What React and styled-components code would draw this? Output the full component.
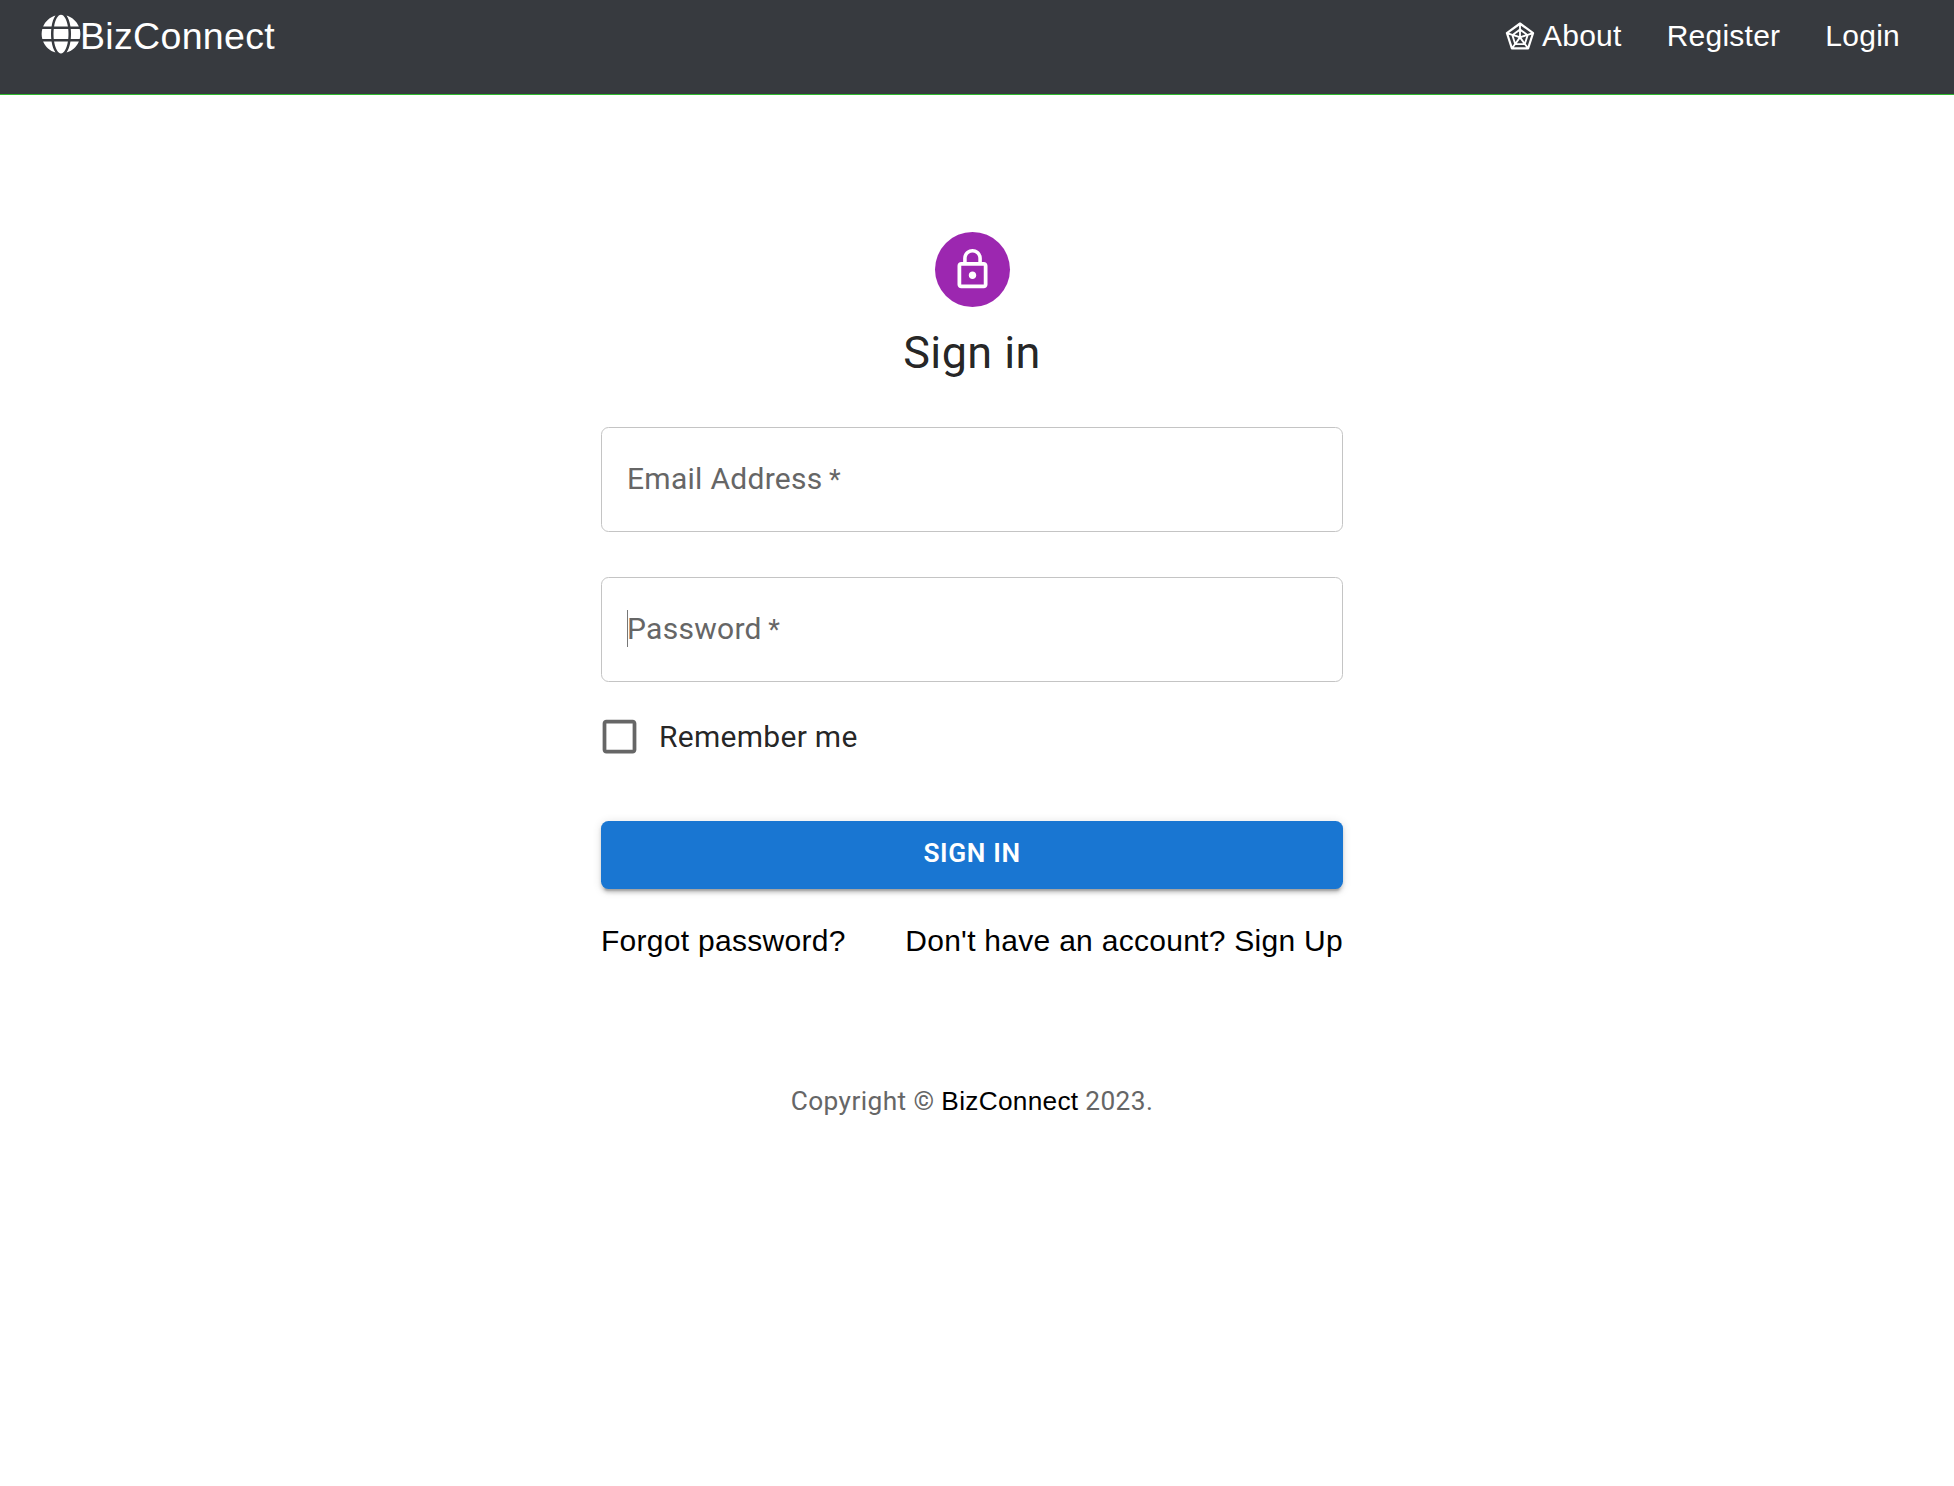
import React from "react";
import styled, { createGlobalStyle } from "styled-components";
import { FaGlobe } from "react-icons/fa";
import { AiOutlineRadarChart } from "react-icons/ai";
import { MdCheckBoxOutlineBlank } from "react-icons/md";

const GlobalStyle = createGlobalStyle`
  *, *::before, *::after { box-sizing: border-box; }
  body { margin: 0; background: #fff; }
`;

const arial = `"Liberation Sans", Arial, sans-serif`;
const roboto = `Roboto, "Liberation Sans", sans-serif`;

const Page = styled.div`
  min-height: 1486px;
  color: rgba(0, 0, 0, 0.87);
  font-family: ${roboto};
  font-size: 30px;
  letter-spacing: 0.28px;
`;

const Header = styled.header`
  display: flex;
  justify-content: space-between;
  align-items: flex-start;
  height: 95px;
  padding: 14px 54px 0 41px;
  background: #373a3f;
  border-bottom: 1px solid #2eb82e;
  color: #fff;
  font-family: ${arial};
  letter-spacing: 0.25px;
`;

const Brand = styled.a`
  display: flex;
  align-items: flex-start;
  font-size: 37.5px;
  line-height: 45px;
  letter-spacing: 0.32px;
  color: inherit;
  text-decoration: none;
  svg { width: 40px; height: 40px; margin-right: -1px; }
`;

const Nav = styled.nav`
  display: flex;
  gap: 45px;
  padding-top: 4px;
`;

const NavLink = styled.a`
  display: flex;
  align-items: center;
  gap: 5px;
  line-height: 35px;
  color: inherit;
  text-decoration: none;
  svg { width: 34px; height: 34px; }
`;

const Main = styled.main`
  display: flex;
  flex-direction: column;
  align-items: center;
  width: 742px;
  margin: 137px 0 0 601px;
`;

const Avatar = styled.div`
  display: grid;
  place-items: center;
  width: 75px;
  height: 75px;
  border-radius: 50%;
  background: #9c27b0;
  color: #fff;
`;

const Title = styled.h1`
  margin: 15px 0 0;
  padding-top: 1px;
  font-size: 45px;
  font-weight: 400;
  line-height: 59px;
  letter-spacing: 0.4px;
`;

const Form = styled.form`
  display: flex;
  flex-direction: column;
  width: 100%;
  margin-top: 45px;
`;

const Field = styled.label`
  display: flex;
  align-items: center;
  height: 105px;
  margin-bottom: ${(p) => (p.$last ? 15 : 45)}px;
  padding: 0 0 2px 25px;
  border: 1px solid #c4c4c4;
  border-radius: 7.5px;
  color: #666;
`;

const Asterisk = styled.span`
  font-size: 27px;
`;

const Caret = styled.span`
  width: 1px;
  height: 37px;
  margin-right: -1px;
  background: #777;
`;

const Remember = styled.label`
  display: flex;
  align-items: center;
  gap: 17px;
  height: 79px;
  margin-left: -4px;
  svg { width: 45px; height: 45px; color: #666; }
`;

const Submit = styled.button`
  height: 68px;
  margin: 45px 0 30px;
  padding: 0 0 4px;
  border: 0;
  border-radius: 7.5px;
  background: #1976d2;
  color: #fff;
  font: 600 26.25px/46px ${roboto};
  letter-spacing: 0.65px;
  box-shadow: 0 5.6px 1.9px -3.75px rgba(0, 0, 0, 0.2), 0 3.75px 3.75px 0 rgba(0, 0, 0, 0.14),
    0 1.9px 9.4px 0 rgba(0, 0, 0, 0.12);
`;

const Links = styled.div`
  display: flex;
  justify-content: space-between;
  line-height: 43px;
`;

const TextLink = styled.a`
  color: #000;
  font-family: ${arial};
  letter-spacing: 0.28px;
  text-decoration: none;
  white-space: nowrap;
`;

const Copyright = styled.p`
  margin: 120px 0 0;
  color: #666;
  font-size: 26.25px;
  line-height: 38px;
  letter-spacing: 0.4px;
`;

const LockIcon = () => (
  <svg width="45" height="45" viewBox="0 0 24 24" fill="currentColor">
    <path d="M12 17c1.1 0 2-.9 2-2s-.9-2-2-2-2 .9-2 2 .9 2 2 2zm6-9h-1V6c0-2.76-2.24-5-5-5S7 3.24 7 6v2H6c-1.1 0-2 .9-2 2v10c0 1.1.9 2 2 2h12c1.1 0 2-.9 2-2V10c0-1.1-.9-2-2-2zM8.9 6c0-1.71 1.39-3.1 3.1-3.1s3.1 1.39 3.1 3.1v2H8.9V6zM18 20H6V10h12v10z" />
  </svg>
);

export default function App() {
  return (
    <Page>
      <GlobalStyle />
      <Header>
        <Brand><FaGlobe />BizConnect</Brand>
        <Nav>
          <NavLink><AiOutlineRadarChart />About</NavLink>
          <NavLink>Register</NavLink>
          <NavLink>Login</NavLink>
        </Nav>
      </Header>
      <Main>
        <Avatar><LockIcon /></Avatar>
        <Title>Sign in</Title>
        <Form>
          <Field><span>Email Address&thinsp;<Asterisk>*</Asterisk></span></Field>
          <Field $last><Caret /><span>Password&thinsp;<Asterisk>*</Asterisk></span></Field>
          <Remember><MdCheckBoxOutlineBlank />Remember me</Remember>
          <Submit type="button">SIGN IN</Submit>
          <Links>
            <TextLink>Forgot password?</TextLink>
            <TextLink>Don't have an account? Sign Up</TextLink>
          </Links>
        </Form>
        <Copyright>Copyright © <TextLink>BizConnect</TextLink> 2023.</Copyright>
      </Main>
    </Page>
  );
}
